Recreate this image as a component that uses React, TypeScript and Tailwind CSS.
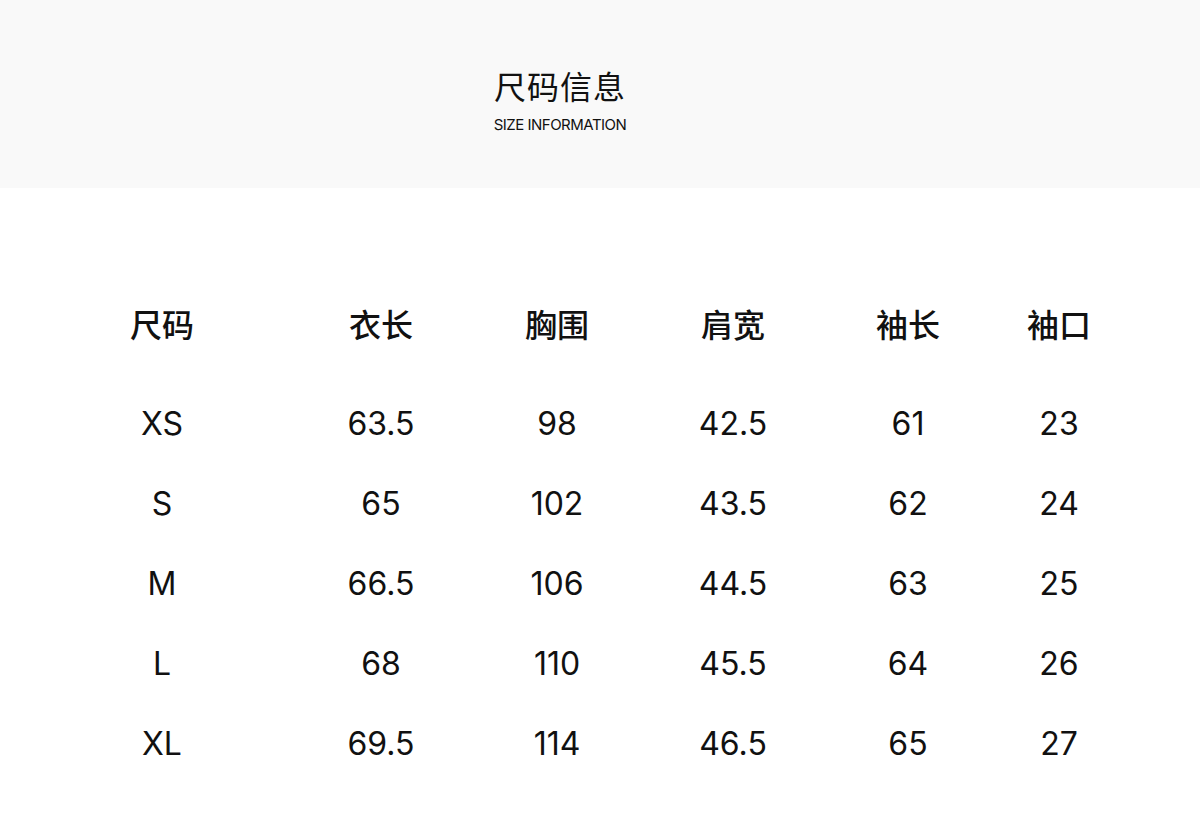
const heads = ["尺码", "衣长", "胸围", "肩宽", "袖长", "袖口"];

const rows = [
  ["XS", "63.5", "98", "42.5", "61", "23"],
  ["S", "65", "102", "43.5", "62", "24"],
  ["M", "66.5", "106", "44.5", "63", "25"],
  ["L", "68", "110", "45.5", "64", "26"],
  ["XL", "69.5", "114", "46.5", "65", "27"],
];

const cols = "grid grid-cols-[262px_176px_176px_176px_174px_128px] pl-[31px]";

export default function App() {
  return (
    <div
      className="min-h-[821px] w-[1200px] bg-white text-[#111]"
      style={{ fontFamily: "Inter, 'Noto Sans CJK SC', sans-serif" }}
    >
      <div className="flex h-[188px] flex-col items-center bg-[#f9f9f9] pr-[80px] pt-[72px]">
        <h1 className="text-[32px] leading-none tracking-[1px] font-normal">尺码信息</h1>
        <p className="mt-[13px] text-[15px] leading-none tracking-[-0.5px]">SIZE INFORMATION</p>
      </div>

      <div className="pt-[98px]">
        <div className={`${cols} h-[80px] items-center text-center text-[32px] font-medium`}>
          {heads.map((h) => (
            <div key={h}>{h}</div>
          ))}
        </div>
        <div className="mt-[18px]">
          {rows.map((r) => (
            <div key={r[0]} className={`${cols} h-[80px] items-center text-center text-[32px]`}>
              {r.map((v, i) => (
                <div key={i}>{v}</div>
              ))}
            </div>
          ))}
        </div>
      </div>
    </div>
  );
}
